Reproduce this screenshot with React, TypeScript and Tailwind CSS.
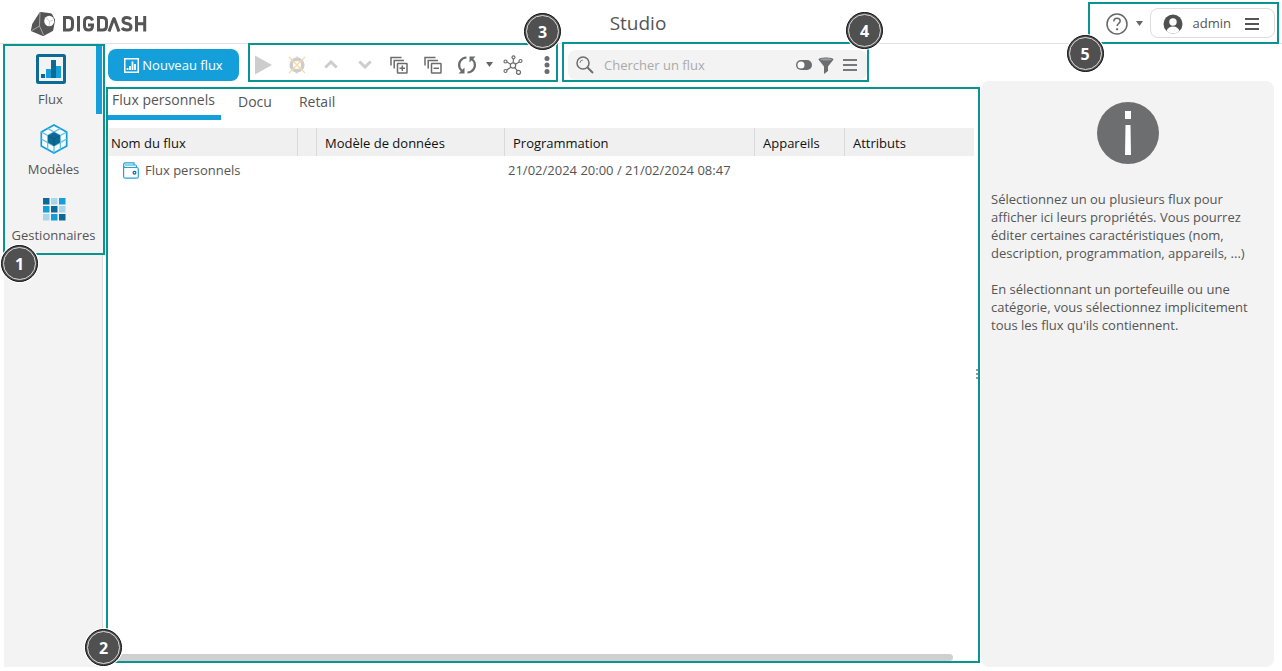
import React from "react";

function Badge({ n, className }: { n: number; className: string }) {
  return (
    <span
      className={`absolute z-10 flex size-[37px] items-center justify-center rounded-full border border-[#111] bg-[#505050] pt-px text-base font-bold text-white ring-1 ring-white ${className}`}
    >
      <span className="absolute inset-px rounded-full border border-[#ddd]" />
      {n}
    </span>
  );
}

function Logo() {
  return (
    <svg width="117" height="26" viewBox="0 0 117 26" role="img" aria-label="DIGDASH">
      <path d="M8.500 1.500Q9 1 10 1l9.500 1.300q1 .2 1.600 1L24 8.500v1L22.300 19q-.2 1-1 1.300L13 24.700q-.8.400-1.700 0L1 20.500q-1-.5-1-1.500l1.200-6z" fill="#555" />
      <path d="M9 1.500L8.500 15L1 19.500M8.500 15L12.500 24" stroke="#a5a5a5" strokeWidth="1" fill="none" />
      <ellipse cx="18.200" cy="10" rx="5" ry="5.300" fill="#fff" />
      <path d="M18.500 10.500L22 9M18.500 10.500L18.200 15M18.500 10.500L15 6.500" stroke="#bbb" strokeWidth=".7" />
      <g fill="none" stroke="#555" strokeWidth="3">
        <path d="M33.500 6.500h4q4 0 4 4v4.500q0 4-4 4h-4z" />
        <path d="M47.500 5v15.500" />
        <path d="M61.500 9.500q-.8-3-4-3q-4 0-4 4v4.500q0 4 4 4q4 0 4-4v-1h-4.500" />
        <path d="M67.500 6.500h4q4 0 4 4v4.500q0 4-4 4h-4z" />
        <path d="M88 20.500L83.200 7.500h-.4L78 20.500" strokeLinejoin="bevel" />
        <path d="M100 8.300q-1.700-1.800-4.300-1.800q-3.700 0-3.700 3q0 2.500 3.800 3q4.200.6 4.200 3.500q0 3-4.200 3q-3.300 0-4.900-2" />
        <path d="M105.500 5v15.500M113.700 5v15.500M105.500 12.700h8.200" />
      </g>
    </svg>
  );
}

function ChartIcon() {
  return (
    <svg width="30" height="30" viewBox="0 0 30 30">
      <rect x="1.500" y="1.500" width="27" height="27" rx="1" fill="#f3f3f3" stroke="#0d6a94" strokeWidth="3" />
      <path d="M5 20h4v4H5zM15 6h5v18h-5z" fill="#0d6a94" />
      <path d="M10 15h5v9h-5zM20 12h5v12h-5z" fill="#149fdb" />
    </svg>
  );
}

function CubeIcon() {
  return (
    <svg width="28" height="30" viewBox="0 0 28 30">
      <path d="M14 1l12.700 7v14L14 29L1.300 22V8z" fill="#f8fcfe" stroke="#149fdb" strokeWidth="1.700" />
      <path
        d="M14 15v14M14 15L1.300 8M14 15l12.700-7M7.700 11.500v14M20.300 11.500v14M1.300 15l12.700 7l12.700-7M7.700 4.500L20.300 11.500M20.300 4.500L7.700 11.500"
        stroke="#5cbbe6"
        strokeWidth="1.200"
        fill="none"
      />
      <path d="M14 8l6 3.400v7L14 22l-6-3.600v-7z" fill="#0d6a94" />
      <path d="M8 11.400l6 3.400l6-3.400M14 14.800V22" stroke="#0a557a" strokeWidth=".8" fill="none" />
    </svg>
  );
}

const tiles = ["#0d6a94", "#a9d7ea", "#149fdb", "#149fdb", "#0d6a94", "#a9d7ea", "#a9d7ea", "#149fdb", "#0d6a94"];

function GridIcon() {
  return (
    <svg width="24" height="24" viewBox="0 0 24 24">
      {tiles.map((c, i) => (
        <rect key={i} x={(i % 3) * 8 + 1} y={Math.floor(i / 3) * 8 + 1} width="6.500" height="6.500" fill={c} />
      ))}
    </svg>
  );
}

function Burger({ className }: { className: string }) {
  return (
    <svg width="14" height="12" viewBox="0 0 14 12" className={className}>
      <path d="M0 1h14M0 6h14M0 11h14" stroke="currentColor" strokeWidth="2" />
    </svg>
  );
}

function Caret() {
  return (
    <svg width="7" height="5" viewBox="0 0 7 5">
      <path d="M0 0h7L3.500 5z" fill="#666" />
    </svg>
  );
}

function Tool({ label, className, children }: { label: string; className: string; children: React.ReactNode }) {
  return (
    <button type="button" aria-label={label} className={`flex h-6 shrink-0 items-center justify-center ${className}`}>
      {children}
    </button>
  );
}

function StackIcon({ plus }: { plus: boolean }) {
  return (
    <svg width="18" height="18" viewBox="0 0 18 18" fill="none" stroke="#6b6c6e" strokeWidth="1.500">
      <path d="M1 9.500V1.500h10.500M4.200 12.500V4.500h9.800" />
      <rect x="7.500" y="7.500" width="9.500" height="9.500" rx=".5" />
      <path d={plus ? "M9.500 12.300h5.500M12.300 9.500v5.500" : "M9.500 12.300h5.500"} />
    </svg>
  );
}

function Toolbar() {
  return (
    <div role="toolbar" className="relative flex w-[310px] shrink-0 items-center border-2 border-[#0a9490] pt-1 pl-[3px]">
      <Tool label="Exécuter" className="w-5">
        <svg width="17" height="20" viewBox="0 0 17 20"><path d="M0 .5l17 9.500L0 19.500z" fill="#cdcdcd" /></svg>
      </Tool>
      <Tool label="Annuler la programmation" className="ml-3 w-6">
        <svg width="18" height="18" viewBox="0 0 18 18" fill="none">
          <circle cx="9" cy="9" r="5.800" stroke="#cdcdcd" strokeWidth="3.600" />
          <path d="M8.500 0v5.500L12 2.800zM9.500 18v-5.500L6 15.200z" fill="#cdcdcd" />
          <path d="M1 1l16 16M17 1L1 17" stroke="#fbd9a5" strokeWidth="1.300" />
        </svg>
      </Tool>
      <Tool label="Monter" className="ml-3 w-5">
        <svg width="14" height="9" viewBox="0 0 14 9"><path d="M1.300 7.500L7 2l5.700 5.500" fill="none" stroke="#cdcdcd" strokeWidth="3" /></svg>
      </Tool>
      <Tool label="Descendre" className="ml-[14px] w-5">
        <svg width="14" height="9" viewBox="0 0 14 9"><path d="M1.300 1.500L7 7l5.700-5.500" fill="none" stroke="#cdcdcd" strokeWidth="3" /></svg>
      </Tool>
      <Tool label="Tout déplier" className="ml-[14px] w-5"><StackIcon plus /></Tool>
      <Tool label="Tout replier" className="ml-[14px] w-5"><StackIcon plus={false} /></Tool>
      <Tool label="Rafraîchir" className="ml-[14px] w-5">
        <svg width="20" height="20" viewBox="0 0 20 20">
          <path d="M9.500 2.500C4 2.500 1 8 2.500 12.500Q3 14 4.800 15.800M10.500 17.500c5.500 0 8.500-5.500 7-10Q17 6 15.200 4.200" fill="none" stroke="#6b6c6e" strokeWidth="2.200" />
          <path d="M1.500 18.500h6v-6zM18.500 1.500h-6v6z" fill="#6b6c6e" />
        </svg>
      </Tool>
      <Tool label="Options de rafraîchissement" className="ml-[6px] w-3"><Caret /></Tool>
      <Tool label="Dépendances" className="ml-2 w-5">
        <svg width="20" height="20" viewBox="0 0 20 20" fill="none" stroke="#6b6c6e" strokeWidth="1.200">
          <circle cx="10" cy="10.500" r="2.700" />
          <circle cx="10.500" cy="2.300" r="1.500" /><circle cx="2.500" cy="6.500" r="1.500" /><circle cx="17.500" cy="6" r="1.500" />
          <circle cx="2.500" cy="16" r="1.500" /><circle cx="15.500" cy="17.300" r="2" />
          <path d="M10.400 4l-.2 3.700M4 7l3.600 2.200M16.200 7l-3.800 2.200M3.800 15l4-2.700M14.300 15.700l-2.600-3" />
        </svg>
      </Tool>
      <Tool label="Plus d'actions" className="ml-[19px] w-[10px]">
        <svg width="6" height="18" viewBox="0 0 6 18" fill="#6b6c6e"><circle cx="3" cy="2.500" r="2.500" /><circle cx="3" cy="9" r="2.500" /><circle cx="3" cy="15.500" r="2.500" /></svg>
      </Tool>
      <Badge n={3} className="-top-8 -right-[5px]" />
    </div>
  );
}

function Search() {
  return (
    <form role="search" className="relative -mt-px ml-1 flex w-[307px] shrink-0 items-end border-2 border-[#0a9490] pl-1">
      <div className="flex h-[30px] flex-1 items-center rounded-lg bg-[#f3f3f3] pr-[10px] pl-2">
        <svg width="18" height="18" viewBox="0 0 18 18" fill="none" stroke="#6b6c6e">
          <circle cx="7" cy="7" r="6" strokeWidth="1.500" />
          <path d="M4 7a3 3 0 0 1 3-3" strokeWidth=".8" />
          <path d="M11.500 11.500l5.500 5.500" strokeWidth="2" />
        </svg>
        <input
          type="text"
          aria-label="Chercher un flux"
          placeholder="Chercher un flux"
          className="ml-[10px] min-w-0 flex-1 bg-transparent pt-px text-[13px] outline-none placeholder:text-[#aaa]"
        />
        <button type="button" aria-label="Mode de recherche" className="ml-2">
          <svg width="16" height="10" viewBox="0 0 16 10"><rect width="16" height="10" rx="5" fill="#6b6c6e" /><circle cx="5" cy="5" r="3.500" fill="#fff" /></svg>
        </button>
        <button type="button" aria-label="Filtrer" className="ml-[6px]">
          <svg width="16" height="17" viewBox="0 0 16 17">
            <path d="M.5 2.500C.5-.3 15.500-.3 15.500 2.500L10 9.500V14l-4 3V9.500z" fill="#6b6c6e" />
            <ellipse cx="8" cy="2.400" rx="6" ry="1.200" fill="#9a9b9d" />
          </svg>
        </button>
        <button type="button" aria-label="Menu de recherche" className="ml-[9px]"><Burger className="text-[#77787a]" /></button>
      </div>
      <Badge n={4} className="-top-8 -right-4" />
    </form>
  );
}

function WalletIcon() {
  return (
    <svg width="16" height="17" viewBox="0 0 16 17" fill="none" stroke="#23a3d9" strokeWidth="1.200">
      <path d="M.6 3v11.400q0 1.800 1.800 1.800h11.200q1.700 0 1.700-1.800V7q0-1.500-1.700-1.500H2.200Q.6 5.500.6 3.200T2.200.8h8.800v1.600M2 3h10.500q1 0 1 2.500" />
      <circle cx="11.500" cy="10.800" r="1.400" stroke="#0d6a94" />
    </svg>
  );
}

const th = "border-l border-[#d9d9d9] pt-1 pl-2 text-left font-normal";

export default function App() {
  return (
    <div className="flex min-h-screen flex-col bg-white pb-1 font-['Open_Sans',sans-serif] text-[13px] text-[#555]">
      <header className="relative grid h-11 shrink-0 grid-cols-[1fr_auto_1fr] border-b border-[#e3e3e3]">
        <div className="pt-[11px] pl-[31px]"><Logo /></div>
        <h1 className="pt-2 pr-[6px] text-[19px] leading-[30px]">Studio</h1>
        <div className="relative z-10 mt-[2px] mr-[3px] -mb-px flex items-center justify-self-end border-2 border-[#0a9490] bg-white pr-[2px] pl-4">
          <button type="button" aria-label="Aide" className="flex items-center gap-2 pt-px">
            <svg width="22" height="22" viewBox="0 0 22 22" fill="none" stroke="#666" strokeWidth="1.500">
              <circle cx="11" cy="11" r="10" />
              <path d="M7.800 8.500q0-3.300 3.200-3.300t3.200 2.900c0 2.200-3.100 2.400-3.100 5" />
              <path d="M11.100 15.300v1.900" strokeWidth="2" />
            </svg>
            <Caret />
          </button>
          <button type="button" className="ml-[7px] flex h-[30px] items-center rounded-lg border border-[#ddd] pt-px pr-[15px] pl-3">
            <svg width="20" height="20" viewBox="0 0 20 20">
              <circle cx="10" cy="10" r="9.500" fill="#505050" />
              <circle cx="10" cy="8" r="3.700" fill="#fff" />
              <path d="M3.500 17Q5 12.500 10 12.500T16.500 17Q13.500 19.500 10 19.500T3.500 17" fill="#fff" />
            </svg>
            <span className="ml-[10px]">admin</span>
            <Burger className="ml-[14px] text-[#555]" />
          </button>
          <Badge n={5} className="top-[31px] -left-[23px]" />
        </div>
      </header>

      <div className="flex flex-1">
        <div className="ml-[3px] flex w-[102px] shrink-0 flex-col">
          <nav className="relative flex h-[211px] flex-col border-2 border-[#0a9490] bg-[#f3f3f3] pr-px text-center">
            <a href="#flux" className="flex h-[68px] flex-col items-center border-r-[6px] border-[#149fdb] pt-2 leading-[18px]">
              <ChartIcon />
              <span className="mt-[6px]">Flux</span>
            </a>
            <a href="#modeles" className="flex flex-col items-center pt-[10px] leading-[18px]">
              <CubeIcon />
              <span className="mt-[6px]">Modèles</span>
            </a>
            <a href="#gestionnaires" className="flex flex-col items-center pt-[19px] leading-[18px]">
              <GridIcon />
              <span className="mt-[5px]">Gestionnaires</span>
            </a>
            <Badge n={1} className="-bottom-[29px] -left-1" />
          </nav>
          <div className="mr-[2px] ml-px flex-1 border-r border-[#ddd] bg-[#f3f3f3]" />
        </div>

        <div className="ml-px flex min-w-0 flex-1 flex-col">
          <div className="-mt-px flex h-[39px]">
            <button type="button" className="mt-[6px] mr-[9px] ml-[2px] flex h-8 w-[131px] shrink-0 items-center justify-center gap-[3px] rounded-lg bg-[#149fdb] pt-px text-white">
              <svg width="15" height="15" viewBox="0 0 15 15" fill="none" stroke="#fff">
                <rect x=".75" y=".75" width="13.500" height="13.500" strokeWidth="1.500" />
                <path d="M3.500 12v-2M6 12V8M8.500 12V3.500M11 12V6" strokeWidth="1.800" />
              </svg>
              Nouveau flux
            </button>
            <Toolbar />
            <Search />
          </div>

          <main className="relative mt-[5px] mb-1 flex flex-1 flex-col border-2 border-[#0a9490]">
            <div role="tablist" className="flex h-[31px] items-start text-sm leading-5">
              <button type="button" role="tab" aria-selected="true" className="h-[31px] w-[113px] border-b-[5px] border-[#149fdb] pr-[2px] pb-[5px] text-center">
                Flux personnels
              </button>
              <button type="button" role="tab" aria-selected="false" className="ml-[17px] pt-[3px]">Docu</button>
              <button type="button" role="tab" aria-selected="false" className="ml-[27px] pt-[3px]">Retail</button>
            </div>
            <div className="mt-2 mr-1 flex-1">
              <table className="w-full table-fixed border-separate border-spacing-0">
                <colgroup>
                  <col className="w-[189px]" />
                  <col className="w-[19px]" />
                  <col className="w-[188px]" />
                  <col className="w-[250px]" />
                  <col className="w-[90px]" />
                  <col />
                </colgroup>
                <thead>
                  <tr className="h-7 bg-[#f0f0f0] text-[#111]">
                    <th className="pt-1 pl-[3px] text-left font-normal">Nom du flux</th>
                    <th className={th} aria-label="État" />
                    <th className={th}>Modèle de données</th>
                    <th className={th}>Programmation</th>
                    <th className={th}>Appareils</th>
                    <th className={th}>Attributs</th>
                  </tr>
                </thead>
                <tbody>
                  <tr className="h-[29px]">
                    <td className="pl-[15px]">
                      <span className="flex items-center gap-[6px]"><WalletIcon />Flux personnels</span>
                    </td>
                    <td />
                    <td />
                    <td className="pl-1 whitespace-nowrap">21/02/2024 20:00 / 21/02/2024 08:47</td>
                    <td />
                    <td />
                  </tr>
                </tbody>
              </table>
            </div>
            <div className="mr-[25px] h-[7px] rounded-r-full bg-[#d0d0d0]" />
            <svg width="3" height="11" viewBox="0 0 3 11" className="absolute top-[280px] -right-px" fill="#999">
              <path d="M0 0h2v2H0zM0 4h2v2H0zM0 8h2v2H0z" />
            </svg>
            <Badge n={2} className="-bottom-[5px] -left-[23px]" />
          </main>
        </div>

        <aside className="mt-[37px] mr-2 ml-px w-[293px] shrink-0 rounded-lg bg-[#f3f3f3] px-[10px] pt-[21px] leading-[18px]">
          <svg width="62" height="62" viewBox="0 0 62 62" className="mx-auto">
            <circle cx="31" cy="31" r="31" fill="#6d6e70" />
            <path d="M28 9h6v8h-6zM28.500 23h5l.5 30h-6z" fill="#fff" />
          </svg>
          <p className="mt-[26px]">
            Sélectionnez un ou plusieurs flux pour afficher ici leurs propriétés. Vous pourrez éditer certaines caractéristiques (nom, description, programmation, appareils, ...)
          </p>
          <p className="mt-[18px]">
            En sélectionnant un portefeuille ou une catégorie, vous sélectionnez implicitement tous les flux qu'ils contiennent.
          </p>
        </aside>
      </div>
    </div>
  );
}
